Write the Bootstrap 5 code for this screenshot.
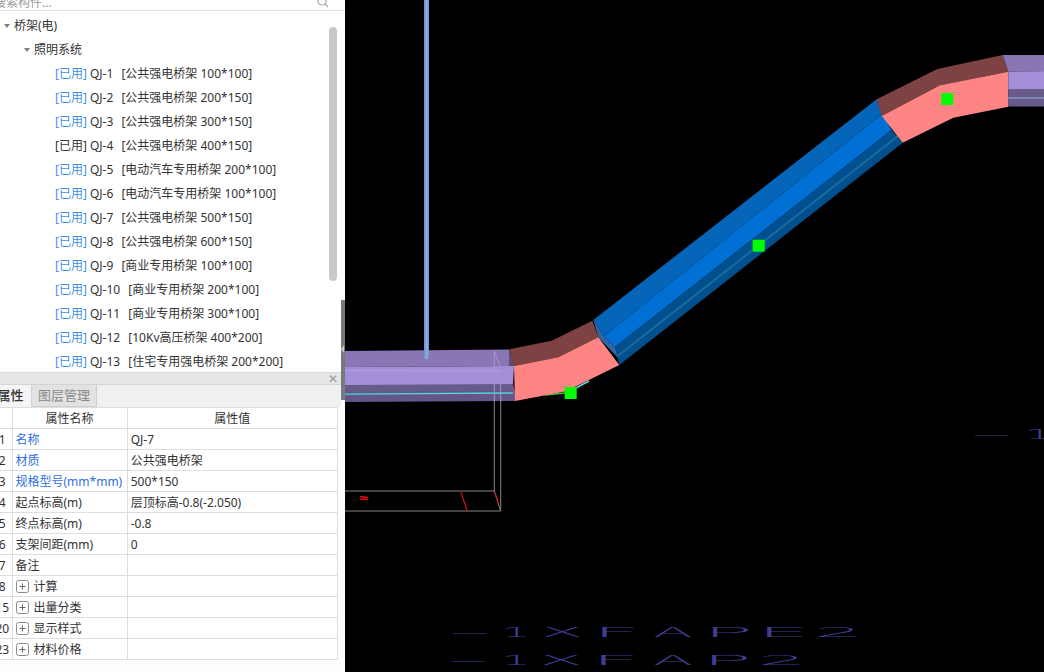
<!DOCTYPE html>
<html lang="zh-CN">
<head>
  <meta charset="UTF-8">
  <title>桥架属性</title>
  <link href="https://cdn.jsdelivr.net/npm/bootstrap@5.3.3/dist/css/bootstrap.min.css" rel="stylesheet">
  <style>
    html, body { height: 100%; overflow: hidden; }
    body { background: #000; font: 12px/1.2 "Noto Sans", "Noto Sans CJK SC", sans-serif; color: #333; }
    .side-panel { width: 345px; height: 672px; background: #fdfdfd; position: relative; overflow: hidden; }
    .search-row { height: 11px; border-bottom: 1px solid #e2e2e2; overflow: hidden; background: #fff; }
    .search-text { margin: -5px 0 0 -6px; color: #999; line-height: 16px; }
    .search-icon { margin-top: -4px; flex: none; }
    .tree-box { height: 357px; padding-top: 3px; overflow: hidden; background: #fff; }
    .tree-row { height: 24px; color: #333; white-space: nowrap; }
    .tree-caret { width: 0; height: 0; border-left: 3.5px solid transparent; border-right: 3.5px solid transparent; border-top: 4px solid #7f7f7f; margin-right: 4px; }
    .lvl-1 { padding-left: 4px; }
    .lvl-2 { padding-left: 24px; }
    .lvl-3 { padding-left: 55px; }
    .used-tag { color: #3f8fe8; margin-right: 3px; }
    .plain-tag { margin-right: 3px; }
    .item-spec { margin-left: 5px; }
    .tree-scroll { position: absolute; left: 329px; top: 27px; width: 8px; height: 254px; border-radius: 4px; background: #c8c8c8; }
    .dock-title { height: 13px; margin-top: 4px; background: #e6e6e6; border-top: 1px solid #d8d8d8; border-bottom: 1px solid #d4d4d4; width: 341px; }
    .dock-close { color: #999; font-size: 12px; line-height: 11px; margin-right: 3px; }
    .dock-tabs { height: 22px; width: 341px; background: #f0f0f0; }
    .dock-tab { height: 22px; display: flex; align-items: center; justify-content: center; font-size: 13px; white-space: nowrap; flex: none; }
    .tab-on { width: 42px; margin-left: -10px; color: #333; background: #f5f5f5; border-right: 1px solid #d4d4d4; font-weight: 500; }
    .tab-off { width: 65px; color: #8a8a8a; background: #e2e2e2; border-right: 1px solid #cfcfcf; border-bottom: 1px solid #cfcfcf; }
    .prop-table { width: 345px; margin: 0 0 0 -7px; table-layout: fixed; border-collapse: collapse; background: #fff; }
    .prop-table td, .prop-table th { height: 21px; padding: 2px 3px 0; border: 1px solid #dedede; font-size: 12px; font-weight: 400; color: #333; background: #fff; white-space: nowrap; overflow: hidden; box-shadow: none; vertical-align: middle; }
    .prop-table td:first-child, .prop-table th:first-child { border-left: 0; text-align: center; padding: 2px 0 0; }
    .prop-blue { color: #2f6fe0 !important; }
    .plus-box { width: 13px; height: 13px; margin: 0 5px 0 0; flex: none; }
    .view-3d { width: 699px; height: 672px; display: block; background: #000; }
    .cad-text { font-family: "DejaVu Sans", sans-serif; font-weight: 200; fill: #3d3d92; }
    .split-handle { position: absolute; left: 341px; top: 300px; width: 4px; height: 100px; background: #747a7e; }
    .split-arrow { position: absolute; left: 0; top: 45px; width: 0; height: 0; border-top: 4px solid transparent; border-bottom: 4px solid transparent; border-right: 3px solid #c4c8ca; }
  </style>
</head>
<body>
  <div class="d-flex">
    <!-- left panel -->
    <div class="side-panel flex-shrink-0">
      <div class="search-row d-flex justify-content-between">
        <div class="search-text">搜索构件...</div>
        <svg width="12" height="12" viewBox="0 0 12 12" class="search-icon me-3"><circle cx="5" cy="5" r="4" fill="none" stroke="#aaa" stroke-width="1.2"/><path d="M8 8l3 3" stroke="#aaa" stroke-width="1.2"/></svg>
      </div>
      <div class="tree-box" id="tree"></div>
      <div class="tree-scroll"></div>

      <div class="dock-title d-flex justify-content-end align-items-center"><span class="dock-close">✕</span></div>
      <div class="dock-tabs d-flex">
        <div class="dock-tab tab-on">属性</div>
        <div class="dock-tab tab-off">图层管理</div>
      </div>
      <table class="table prop-table" id="props">
        <colgroup><col style="width:19px"><col style="width:115px"><col style="width:210px"></colgroup>
        <thead><tr><th></th><th class="text-center">属性名称</th><th class="text-center">属性值</th></tr></thead>
        <tbody></tbody>
      </table>
      <div class="split-handle"><div class="split-arrow"></div></div>
    </div>

    <!-- 3d view, coordinates are the screen ones -->
    <svg class="view-3d" viewBox="345 0 699 672" id="view">
      <!-- left tray -->
      <polygon points="345,351 509,349.5 514,366 345,367" fill="#8a76b4"/>
      <polygon points="345,367 514,366 513,385 345,385" fill="#a38fd8"/>
      <polygon points="345,385 513,384 515,392 345,392" fill="#695a8c"/>
      <polygon points="345,392 515,391 515,401 345,402" fill="#64558a"/>
      <polygon points="509,349.5 514,366 509,366" fill="#5f4c70"/>
      <rect x="424" y="0" width="5" height="359" fill="#7398d2"/>
      <rect x="426" y="0" width="1.5" height="359" fill="#8fb0e4"/>
      <path d="M345 370.5L500 371" stroke="#b3a2e0" fill="none"/>
      <path d="M345 394.2L513 393" stroke="#4fd8d0" stroke-width="1.3" fill="none"/>
      <path d="M545 395L565 393" stroke="#2fc82f" stroke-width="1.5" fill="none"/>
      <path d="M576 388L589 381" stroke="#5fd8e0" stroke-width="1.5" fill="none"/>

      <!-- wire box -->
      <path d="M494.3 351V402M500.7 368V402M494.3 351L500.7 368" stroke="#a596cc" fill="none"/>
      <path d="M494.3 402V491M500.7 402V511M345 491H494.3M345 511H500.7M494.3 491L500.7 511" stroke="#858585" fill="none"/>
      <path d="M460.7 491.7L467.3 511M495 492.7L498.7 504" stroke="#e01010" stroke-width="1.1" fill="none"/>
      <path d="M360 496.5L368 497.5M360 499L368 499.5" stroke="#e01010" stroke-width="1.4" fill="none"/>

      <!-- blue run -->
      <polygon points="593.3,320 876.7,99.3 881.7,114 604,336" fill="#0565b8"/>
      <polygon points="604,336 881.7,114 891.7,130 615,347" fill="#0070d4"/>
      <polygon points="615,347 891.7,130 902.7,142.7 619.3,365" fill="#00508f"/>
      <polygon points="593.3,320 604,336 615,347 618,358 598.3,337.3" fill="#2f64a5"/>
      <path d="M617 356.5L898 136" stroke="#1a6c9c" stroke-width="2" fill="none"/>

      <!-- first elbow -->
      <polygon points="509.3,349.3 551.7,340.7 592.3,320.7 598.3,337.3 558.3,357.3 514,366" fill="#7f4242"/>
      <polygon points="514,366 558.3,357.3 598.3,337.3 619.3,365 576.7,386 564,391.7 515,401" fill="#ff8585"/>

      <!-- second elbow -->
      <polygon points="876.7,99.3 937.3,69 1002.7,55 1008.3,71.7 940,85.3 881.7,116" fill="#7f4242"/>
      <polygon points="881.7,116 940,85.3 1008.3,71.7 1008.3,106.7 953.3,117.7 902.7,142.7" fill="#ff8585"/>

      <!-- right tray -->
      <polygon points="1002.7,55 1044,55 1044,72 1008.3,71.7" fill="#8a76b4"/>
      <rect x="1008.3" y="71.7" width="36" height="18" fill="#a38fd8"/>
      <rect x="1008.3" y="89.5" width="36" height="17" fill="#695a8c"/>
      <path d="M1008 98H1044" stroke="#7f86b4" stroke-width="2" fill="none"/>

      <!-- grips -->
      <rect x="564.7" y="387" width="12" height="12" fill="#00ff00"/>
      <rect x="752.7" y="239.7" width="12" height="12" fill="#00ff00"/>
      <rect x="941.3" y="93" width="12" height="12" fill="#00ff00"/>
      <g id="cad"></g>
    </svg>
  </div>

  <script>
    const TREE = [
      ["QJ-1", "公共强电桥架 100*100"], ["QJ-2", "公共强电桥架 200*150"], ["QJ-3", "公共强电桥架 300*150"],
      ["QJ-4", "公共强电桥架 400*150", 1], ["QJ-5", "电动汽车专用桥架 200*100"], ["QJ-6", "电动汽车专用桥架 100*100"],
      ["QJ-7", "公共强电桥架 500*150"], ["QJ-8", "公共强电桥架 600*150"], ["QJ-9", "商业专用桥架 100*100"],
      ["QJ-10", "商业专用桥架 200*100"], ["QJ-11", "商业专用桥架 300*100"], ["QJ-12", "10Kv高压桥架 400*200"],
      ["QJ-13", "住宅专用强电桥架 200*200"]
    ];
    const PROPS = [
      ["1", "名称", "QJ-7", 1], ["2", "材质", "公共强电桥架", 1], ["3", "规格型号(mm*mm)", "500*150", 1],
      ["4", "起点标高(m)", "层顶标高-0.8(-2.050)"], ["5", "终点标高(m)", "-0.8"], ["6", "支架间距(mm)", "0"],
      ["7", "备注", ""]
    ];
    const GROUPS = [["8", "计算"], ["15", "出量分类"], ["20", "显示样式"], ["23", "材料价格"]];
    const PLUS = `<svg class="plus-box" viewBox="0 0 13 13"><rect x=".5" y=".5" width="12" height="12" rx="2" fill="#fff" stroke="#8c8c8c"/><path d="M3.5 6.5h6M6.5 3.5v6" stroke="#666"/></svg>`;

    let tree = `<div class="tree-row lvl-1 d-flex align-items-center"><span class="tree-caret"></span>桥架(电)</div>
      <div class="tree-row lvl-2 d-flex align-items-center"><span class="tree-caret"></span>照明系统</div>`;
    TREE.forEach(t => {
      const tag = t[2] ? `<span class="plain-tag">[已用]</span>` : `<span class="used-tag">[已用]</span>`;
      tree += `<div class="tree-row lvl-3 d-flex align-items-center">${tag}${t[0]}<span class="item-spec">&nbsp;[${t[1]}]</span></div>`;
    });
    document.getElementById("tree").innerHTML = tree;

    const body = document.querySelector("#props tbody");
    PROPS.forEach(p => {
      body.innerHTML += `<tr><td>${p[0]}</td><td class="${p[3] ? "prop-blue" : ""}">${p[1]}</td><td>${p[2]}</td></tr>`;
    });
    GROUPS.forEach(g => {
      body.innerHTML += `<tr><td>${g[0]}</td><td><div class="d-flex align-items-center">${PLUS}${g[1]}</div></td><td></td></tr>`;
    });

    // CAD annotation: one stretched glyph each, x and width from the drawing
    const GLYPH = { "—": [0, 37], "1": [-4, 30], "X": [-1.5, 43], "F": [-5, 49], "A": [-1, 40], "P": [-5, 50], "E": [-6, 53], "2": [-5, 49] };
    const CAD = [
      [637, "—1XFAPE2", [451, 505, 542, 597, 654, 708, 763, 819]],
      [665, "—1XFAP2", [450, 505, 541, 596, 654, 707, 763]],
      [439, "—1", [973, 1028]]
    ];
    let cad = "";
    CAD.forEach(c => {
      [...c[1]].forEach((ch, i) => {
        const g = GLYPH[ch];
        cad += `<text class="cad-text" x="${c[2][i] + g[0]}" y="${c[0]}" font-size="14" textLength="${g[1]}" lengthAdjust="spacingAndGlyphs">${ch}</text>`;
      });
    });
    document.getElementById("cad").innerHTML = cad;
  </script>
  <script src="https://cdn.jsdelivr.net/npm/bootstrap@5.3.3/dist/js/bootstrap.bundle.min.js"></script>
</body>
</html>
